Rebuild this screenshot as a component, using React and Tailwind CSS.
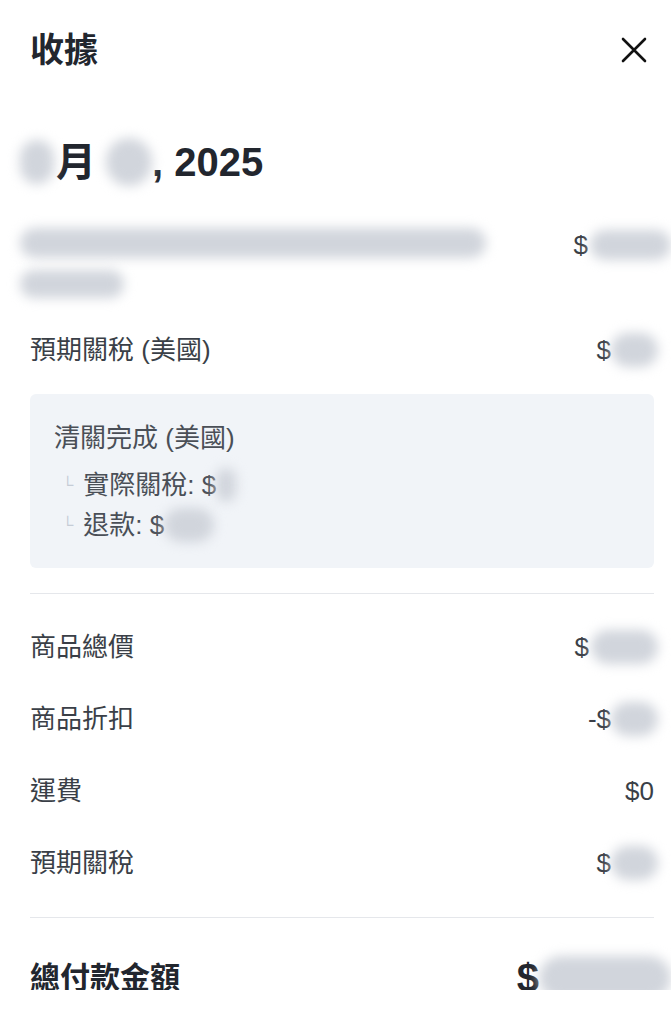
const font = {
  fontFamily: '"Liberation Sans", "Noto Sans CJK TC", sans-serif',
};

function Smudge({ className = "" }) {
  return <span className={`inline-block rounded-full bg-gray-300 blur-[6px] ${className}`} />;
}

function Row({ label, children }) {
  return (
    <div className="flex items-center justify-between h-[32px] text-[26px] leading-[32px] text-[#3a3f47]">
      <span>{label}</span>
      <span className="flex items-center">{children}</span>
    </div>
  );
}

export default function App() {
  return (
    <div className="h-[990px] w-full overflow-hidden bg-white pl-[30px] pr-[17px]" style={font}>
      <header className="flex h-[100px] items-center justify-between">
        <h1 className="text-[34px] font-bold leading-[40px] text-[#22262e]">收據</h1>
        <button type="button" aria-label="Close" className="mr-[5px] grid h-[30px] w-[30px] place-items-center">
          <svg width="28" height="28" viewBox="0 0 28 28" fill="none" stroke="#111" strokeWidth="2.6" strokeLinecap="round">
            <path d="M3 3L25 25M25 3L3 25" />
          </svg>
        </button>
      </header>

      <div className="mt-[38px] flex h-[48px] items-center text-[40px] font-bold leading-[48px] text-[#22262e]">
        <Smudge className="-ml-[10px] h-[44px] w-[34px] bg-gray-200" />
        <span className="ml-[2px]">月</span>
        <Smudge className="ml-[10px] h-[48px] w-[46px] bg-gray-200" />
        <span>, 2025</span>
      </div>

      {/* line item */}
      <div className="mt-[42px] flex justify-between">
        <div className="flex flex-col gap-[12px] -ml-[10px]">
          <Smudge className="h-[30px] w-[466px] bg-gray-200" />
          <Smudge className="h-[28px] w-[104px] bg-gray-200" />
        </div>
        <span className="flex h-[34px] items-center text-[26px] text-[#3a3f47]">
          $<Smudge className="-mr-[17px] ml-[2px] h-[30px] w-[81px] bg-gray-200" />
        </span>
      </div>

      <div className="mt-[36px]">
        <Row label="預期關稅 (美國)">
          $<Smudge className="-mr-[4px] h-[34px] w-[47px] bg-gray-300" />
        </Row>
      </div>

      <div className="mt-[28px] rounded-[6px] bg-[#f1f4f8] px-[24px] pt-[28px] pb-[23px] text-[26px] text-[#4a4f57]">
        <div className="leading-[32px]">清關完成 (美國)</div>
        <div className="mt-[11px] flex h-[40px] items-center leading-[40px]">
          <span className="mr-[10px] ml-[8px] text-[16px] text-[#c5ccd6]">└</span>
          實際關稅: $<Smudge className="h-[34px] w-[20px] bg-gray-300" />
        </div>
        <div className="flex h-[40px] items-center leading-[40px]">
          <span className="mr-[10px] ml-[8px] text-[16px] text-[#c5ccd6]">└</span>
          退款: $<Smudge className="h-[34px] w-[50px] bg-gray-300" />
        </div>
      </div>

      <div className="mt-[25px] h-px bg-[#e5e7eb]" />

      <div className="mt-[37px] flex flex-col gap-[40px]">
        <Row label="商品總價">
          $<Smudge className="-mr-[4px] ml-[2px] h-[34px] w-[67px] bg-gray-300" />
        </Row>
        <Row label="商品折扣">
          -$<Smudge className="-mr-[4px] h-[34px] w-[47px] bg-gray-300" />
        </Row>
        <Row label="運費">$0</Row>
        <Row label="預期關稅">
          $<Smudge className="-mr-[4px] h-[34px] w-[47px] bg-gray-300" />
        </Row>
      </div>

      <div className="mt-[38px] h-px bg-[#e5e7eb]" />

      <div className="mt-[36px] flex items-center justify-between text-[#22262e]">
        <span className="text-[30px] font-bold leading-[36px]">總付款金額</span>
        <span className="flex items-center text-[40px] font-bold leading-[48px]">
          $<Smudge className="-mr-[17px] h-[44px] w-[132px] bg-gray-300" />
        </span>
      </div>
    </div>
  );
}
